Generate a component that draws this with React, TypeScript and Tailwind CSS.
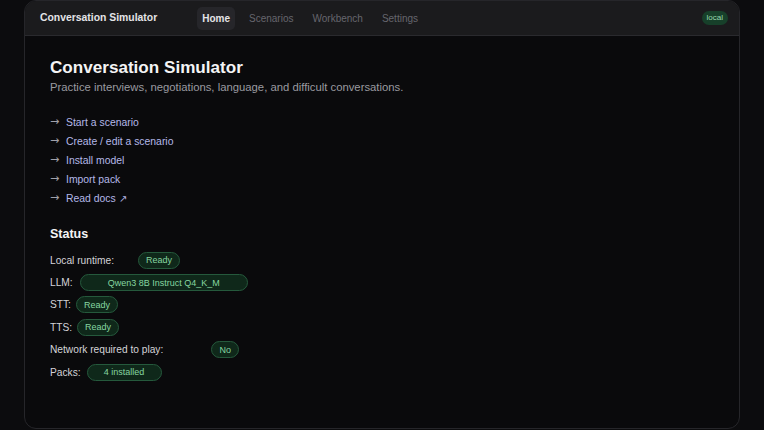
const NAV = ['Home', 'Scenarios', 'Workbench', 'Settings']

const LINKS = [
  'Start a scenario',
  'Create / edit a scenario',
  'Install model',
  'Import pack',
  'Read docs ↗',
]

function Pill({ label, className = '' }: { label: string; className?: string }) {
  return (
    <span
      className={`inline-flex h-[17px] items-center justify-center rounded-full border border-[#25593c] bg-[#0f281a] pt-[1px] text-[9px] leading-none text-[#86d6a0] ${className}`}
    >
      {label}
    </span>
  )
}

function StatusRow({ label, children }: { label: string; children: React.ReactNode }) {
  return (
    <div className="flex h-[22.4px] items-center text-[10.2px] text-[#d4d4d8]">
      <span>{label}</span>
      {children}
    </div>
  )
}

export default function App() {
  return (
    <div
      className="h-[430px] w-[764px] overflow-hidden bg-[#0c0c0e]"
      style={{ fontFamily: '"Liberation Sans", Arial, sans-serif' }}
    >
      <div className="mx-[24px] flex h-[429px] flex-col overflow-hidden rounded-[12px] border border-[#26262a] bg-[#0a0a0c]">
        {/* Header */}
        <header className="flex h-[35px] shrink-0 items-center border-b border-[#2a2a2e] bg-[#1b1b1d] pl-[15px] pr-[11px]">
          <span className="text-[10.4px] font-bold text-[#e4e4e7]">Conversation Simulator</span>
          <nav className="ml-[40px] flex items-center gap-[9px]">
            {NAV.map((n, i) => (
              <span
                key={n}
                className={
                  i === 0
                    ? 'rounded-[5px] bg-[#26262a] px-[5px] py-[4px] text-[10px] font-bold text-[#e4e4e7]'
                    : 'px-[5px] py-[4px] text-[10px] text-[#66666d]'
                }
              >
                {n}
              </span>
            ))}
          </nav>
          <span className="ml-auto rounded-full bg-[#17402a] px-[5px] py-[1px] text-[8px] text-[#9ad8ad]">local</span>
        </header>

        {/* Body */}
        <main className="flex flex-col px-[25px] pt-[21px]">
          <h1 className="text-[17.1px] leading-[22px] font-bold text-[#f4f4f5]">Conversation Simulator</h1>
          <p className="text-[11.3px] leading-[16px] text-[#9a9aa0]">
            Practice interviews, negotiations, language, and difficult conversations.
          </p>

          <ul className="mt-[18px] flex flex-col">
            {LINKS.map((l) => (
              <li key={l} className="flex h-[19px] items-center text-[10.4px]">
                <span
                  className="w-[16px] text-[11px] text-[#a1a1aa]"
                  style={{ fontFamily: '"DejaVu Sans", sans-serif' }}
                >
                  →
                </span>
                <span className="text-[#b4b8e8]">{l}</span>
              </li>
            ))}
          </ul>

          <h2 className="mt-[18px] text-[12.5px] leading-[16px] font-bold text-[#f4f4f5]">Status</h2>

          <div className="mt-[7px] flex flex-col">
            <StatusRow label="Local runtime:">
              <Pill label="Ready" className="ml-[24px] w-[42px]" />
            </StatusRow>
            <StatusRow label="LLM:">
              <Pill label="Qwen3 8B Instruct Q4_K_M" className="ml-[7px] w-[168px]" />
            </StatusRow>
            <StatusRow label="STT:">
              <Pill label="Ready" className="ml-[5px] w-[42px]" />
            </StatusRow>
            <StatusRow label="TTS:">
              <Pill label="Ready" className="ml-[5px] w-[42px]" />
            </StatusRow>
            <StatusRow label="Network required to play:">
              <Pill label="No" className="ml-[48px] w-[28px]" />
            </StatusRow>
            <StatusRow label="Packs:">
              <Pill label="4 installed" className="ml-[6px] w-[75px]" />
            </StatusRow>
          </div>
        </main>
      </div>
    </div>
  )
}
